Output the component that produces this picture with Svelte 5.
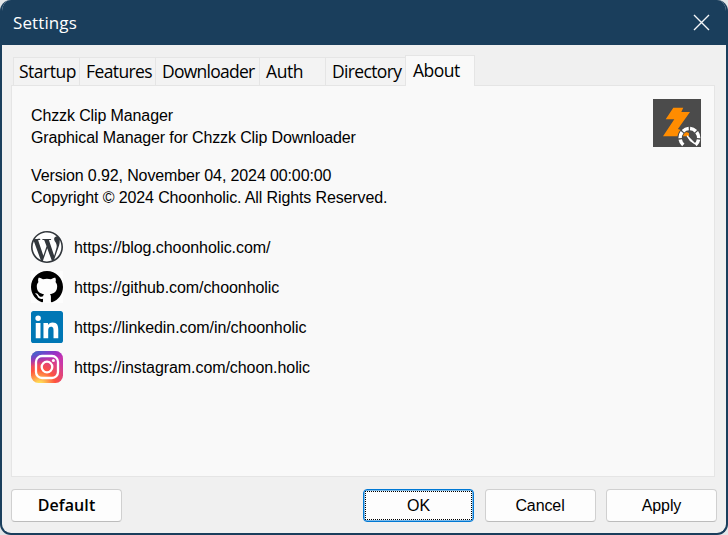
<script>
  const tabs = [
    { label: 'Startup', width: 66, spacing: -0.5 },
    { label: 'Features', width: 76, spacing: -0.6 },
    { label: 'Downloader', width: 104, spacing: -0.75 },
    { label: 'Auth', width: 66, spacing: -0.4 },
    { label: 'Directory', width: 80, spacing: -0.65 },
    { label: 'About', width: 70, spacing: -0.5 }
  ];
  let active = $state('About');
  const links = [
    { icon: 'wordpress', url: 'https://blog.choonholic.com/' },
    { icon: 'github', url: 'https://github.com/choonholic' },
    { icon: 'linkedin', url: 'https://linkedin.com/in/choonholic' },
    { icon: 'instagram', url: 'https://instagram.com/choon.holic' }
  ];
</script>

<div class="window">
  <header>
    <span class="title">Settings</span>
    <svg class="close" width="17" height="17" viewBox="0 0 17 17"><path d="M1 1L16 16M16 1L1 16" stroke="#f4f6f8" stroke-width="1.4" /></svg>
  </header>
  <main>
    <nav>
      {#each tabs as tab}
        <button class="tab" class:active={active === tab.label} style="width:{tab.width}px;letter-spacing:{tab.spacing}px" onclick={() => (active = tab.label)}>{tab.label}</button>
      {/each}
    </nav>
    <section class="panel">
      <div class="intro">
        <div class="about">
          <p>Chzzk Clip Manager<br />Graphical Manager for Chzzk Clip Downloader</p>
          <p>Version 0.92, November 04, 2024 00:00:00<br />Copyright © 2024 Choonholic. All Rights Reserved.</p>
        </div>
        <svg class="logo" width="48" height="48" viewBox="0 0 48 48">
          <rect width="48" height="48" fill="#4b4b4b" />
          <path d="M20.3 8.8H30.3L28.3 12.9H37L24.9 30L36 34V37.2H10L21.3 20.3H12.7Z" fill="#ff8c00" />
          <g transform="translate(36.4 38.8)" fill="none">
            <path d="M-6.2 7.2A9.4 9.4 0 1 1 6.2 7.2" stroke="#4b4b4b" stroke-width="5.2" />
            <path d="M-6.1 7.1A9.3 9.3 0 1 1 6.1 7.1" pathLength="100" stroke="#fff" stroke-width="3.5" stroke-dasharray="14.2 2.96" />
            <path d="M-2 -1.7L5.4 5.9L1.2 3Z" fill="#fff" stroke="#fff" stroke-width="1.3" stroke-linejoin="round" />
          </g>
        </svg>
      </div>
      <div class="links">
        {#each links as link}
          <div class="link">
            {#if link.icon === 'wordpress'}
              <svg width="32" height="32" viewBox="0 0 24 24"><circle cx="12" cy="12" r="11.5" fill="#fff" /><path fill="#32373c" d="M21.469 6.825c.84 1.537 1.318 3.3 1.318 5.175 0 3.979-2.156 7.456-5.363 9.325l3.295-9.527c.615-1.54.82-2.771.82-3.864 0-.405-.026-.78-.07-1.11m-7.981.105c.647-.03 1.232-.105 1.232-.105.582-.075.514-.93-.067-.899 0 0-1.755.135-2.88.135-1.064 0-2.85-.15-2.85-.15-.585-.03-.661.855-.075.885 0 0 .54.061 1.125.09l1.68 4.605-2.37 7.08L5.354 6.9c.649-.03 1.234-.1 1.234-.1.585-.075.516-.93-.065-.896 0 0-1.746.138-2.874.138-.2 0-.438-.008-.69-.015C4.911 3.15 8.235 1.215 12 1.215c2.809 0 5.365 1.072 7.286 2.833-.046-.003-.091-.009-.141-.009-1.06 0-1.812.923-1.812 1.914 0 .89.513 1.643 1.06 2.531.411.72.89 1.643.89 2.977 0 .915-.354 1.994-.821 3.479l-1.075 3.585-3.9-11.61zM12 22.784c-1.059 0-2.081-.153-3.048-.437l3.237-9.406 3.315 9.087c.024.053.05.101.078.149-1.12.393-2.325.609-3.582.609M1.211 12c0-1.564.336-3.05.935-4.39L7.29 21.709C3.694 19.96 1.212 16.271 1.211 12M12 0C5.385 0 0 5.385 0 12s5.385 12 12 12 12-5.385 12-12S18.615 0 12 0" /></svg>
            {:else if link.icon === 'github'}
              <svg width="32" height="32" viewBox="0 0 24 24"><rect width="24" height="24" fill="#fdfdfd" /><path transform="translate(0 -.25)" d="M12 .297c-6.63 0-12 5.373-12 12 0 5.303 3.438 9.8 8.205 11.385.6.113.82-.258.82-.577 0-.285-.01-1.04-.015-2.04-3.338.724-4.042-1.61-4.042-1.61C4.422 18.07 3.633 17.7 3.633 17.7c-1.087-.744.084-.729.084-.729 1.205.084 1.838 1.236 1.838 1.236 1.07 1.835 2.809 1.305 3.495.998.108-.776.417-1.305.76-1.605-2.665-.3-5.466-1.332-5.466-5.93 0-1.31.465-2.38 1.235-3.22-.135-.303-.54-1.523.105-3.176 0 0 1.005-.322 3.3 1.23.96-.267 1.98-.399 3-.405 1.02.006 2.04.138 3 .405 2.28-1.552 3.285-1.23 3.285-1.23.645 1.653.24 2.873.12 3.176.765.84 1.23 1.91 1.23 3.22 0 4.61-2.805 5.625-5.475 5.92.42.36.81 1.096.81 2.22 0 1.606-.015 2.896-.015 3.286 0 .315.21.69.825.57C20.565 22.092 24 17.592 24 12.297c0-6.627-5.373-12-12-12" /></svg>
            {:else if link.icon === 'linkedin'}
              <svg width="32" height="32" viewBox="0 0 24 24"><rect x="1" y="1" width="22" height="22" fill="#fff" /><path fill="#0077b5" d="M20.447 20.452h-3.554v-5.569c0-1.328-.027-3.037-1.852-3.037-1.853 0-2.136 1.445-2.136 2.939v5.667H9.351V9h3.414v1.561h.046c.477-.9 1.637-1.85 3.37-1.85 3.601 0 4.267 2.37 4.267 5.455v6.286zM5.337 7.433a2.062 2.062 0 1 1 0-4.125 2.062 2.062 0 0 1 0 4.125zm1.782 13.019H3.555V9h3.564v11.452zM22.225 0H1.771C.792 0 0 .774 0 1.729v20.542C0 23.227.792 24 1.771 24h20.451C23.2 24 24 23.227 24 22.271V1.729C24 .774 23.2 0 22.222 0h.003z" /></svg>
            {:else}
              <svg width="32" height="32" viewBox="0 0 32 32">
                <defs>
                  <radialGradient id="warm" gradientUnits="userSpaceOnUse" cx="8.5" cy="34.5" r="31.7"><stop offset="0" stop-color="#fd5" /><stop offset=".1" stop-color="#fd5" /><stop offset=".5" stop-color="#ff543e" /><stop offset="1" stop-color="#c837ab" /></radialGradient>
                  <radialGradient id="cool" gradientUnits="userSpaceOnUse" cx="0" cy="0" r="1" gradientTransform="translate(-5.4 2.3) rotate(78.7) scale(14.2 58.4)"><stop offset="0" stop-color="#3771c8" /><stop offset=".128" stop-color="#3771c8" /><stop offset="1" stop-color="#60f" stop-opacity="0" /></radialGradient>
                </defs>
                <rect width="32" height="32" rx="7.5" fill="url(#warm)" />
                <rect width="32" height="32" rx="7.5" fill="url(#cool)" />
                <rect x="5" y="5" width="22" height="22" rx="6" fill="none" stroke="#fff" stroke-width="2.3" />
                <circle cx="16" cy="16" r="5.3" fill="none" stroke="#fff" stroke-width="2.3" />
                <circle cx="22.4" cy="9.6" r="1.5" fill="#fff" />
              </svg>
            {/if}
            <span>{link.url}</span>
          </div>
        {/each}
      </div>
    </section>
    <footer>
      <button class="default">Default</button>
      <div class="actions">
        <button class="ok"><span>OK</span></button>
        <button>Cancel</button>
        <button>Apply</button>
      </div>
    </footer>
  </main>
</div>

<style>
  :global(body) { margin: 0; background: #e4e6e8; overflow: hidden; }
  .window { width: 728px; height: 535px; box-sizing: border-box; display: flex; flex-direction: column; border: 2px solid #1a3e5c; border-top: 0; border-radius: 11px; background: #f0f0f0; overflow: hidden; font: 16px/22px "Liberation Sans", Arial, sans-serif; color: #000; }
  header { height: 45px; flex: none; box-sizing: border-box; display: flex; align-items: center; justify-content: space-between; padding: 0 16px 0 11px; background: #1a3e5c; color: #fff; }
  .title { font-family: "Open Sans", sans-serif; font-size: 17px; letter-spacing: 0.1px; }
  main { flex: 1; display: flex; flex-direction: column; padding: 10px 9px 11px; min-height: 0; }
  nav { height: 30px; display: flex; align-items: flex-end; padding-left: 2px; flex: none; }
  .tab { box-sizing: border-box; flex: none; height: 28px; padding: 0 0 1px 6px; margin: 0; border: 1px solid #e5e5e5; border-right: 0; border-bottom: 0; border-radius: 0; background: #f3f3f3; font: 17.5px/24px "Open Sans", sans-serif; text-align: left; color: #000; white-space: nowrap; }
  .tab:first-child { padding-left: 5px; }
  .tab.active { position: relative; height: 31px; margin-bottom: -1px; padding: 0 0 3px 7px; border-right: 1px solid #e5e5e5; background: #f9f9f9; }
  .panel { box-sizing: border-box; height: 392px; flex: none; padding: 13px 13px 0 19px; border: 1px solid #e5e5e5; background: #f9f9f9; width: 704px; }
  .intro { display: flex; justify-content: space-between; height: 132px; }
  .about { padding-top: 6px; letter-spacing: -0.12px; }
  .about p { margin: 0 0 16px; }
  .links { display: flex; flex-direction: column; gap: 8px; letter-spacing: -0.07px; }
  .link { display: flex; align-items: center; gap: 11px; height: 32px; }
  .link svg { display: block; }
  .link span { padding-top: 2px; }
  footer { display: flex; justify-content: space-between; margin-top: 12px; width: 706px; }
  .actions { display: flex; gap: 10.5px; }
  footer button { box-sizing: border-box; width: 111px; height: 33px; margin: 0; padding: 0; border: 1px solid #d0d0d0; border-bottom-color: #bcbcbc; border-radius: 4px; background: #fdfdfd; color: #000; font: 16px/22px "Liberation Sans", Arial, sans-serif; letter-spacing: -0.1px; }
  footer .default { padding-bottom: 2px; font-family: "Open Sans", sans-serif; font-weight: 600; letter-spacing: 0.1px; }
  footer .ok { display: flex; padding: 1px; border-color: #0078d4; box-shadow: inset 0 0 0 0.5px #0078d4; outline: none; }
  .ok span { flex: 1; align-self: stretch; display: flex; align-items: center; justify-content: center; border: 1px dotted #000; }
</style>
